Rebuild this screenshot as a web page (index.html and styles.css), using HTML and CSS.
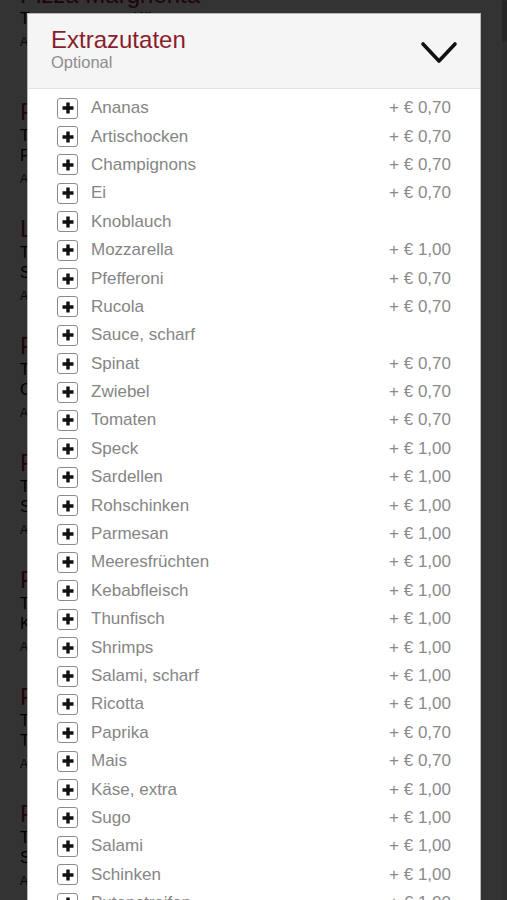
FILE: index.html
```html
<!DOCTYPE html>
<html lang="de">
<head>
    <meta charset="UTF-8">
    <meta name="viewport" content="width=device-width, initial-scale=1.0">
    <title>Extrazutaten</title>
    <link rel="stylesheet" href="styles.css">
</head>
<body>

    <div class="menu">
        <div class="pizza">
            <h2>Pizza Margherita</h2>
            <p>Tomatensauce, Käse</p>
            <small>Allergene: A, G</small>
        </div>
        <div class="pizza">
            <h2>Pizza Funghi</h2>
            <p>Tomatensauce, Käse,<br>Frische Champignons</p>
            <small>Allergene: A, G</small>
        </div>
        <div class="pizza">
            <h2>Lasagne</h2>
            <p>Tomatensauce, Käse,<br>Sugo, Bechamel</p>
            <small>Allergene: A, C, G</small>
        </div>
        <div class="pizza">
            <h2>Pizza Capricciosa</h2>
            <p>Tomatensauce, Käse,<br>Champignons, Schinken</p>
            <small>Allergene: A, G</small>
        </div>
        <div class="pizza">
            <h2>Pizza Salami</h2>
            <p>Tomatensauce, Käse,<br>Salami</p>
            <small>Allergene: A, G</small>
        </div>
        <div class="pizza">
            <h2>Pizza Prosciutto</h2>
            <p>Tomatensauce, Käse,<br>Kochschinken</p>
            <small>Allergene: A, G</small>
        </div>
        <div class="pizza">
            <h2>Pizza Tonno</h2>
            <p>Tomatensauce, Käse,<br>Thunfisch, Zwiebel</p>
            <small>Allergene: A, D, G</small>
        </div>
        <div class="pizza">
            <h2>Pizza Hawaii</h2>
            <p>Tomatensauce, Käse,<br>Schinken, Ananas</p>
            <small>Allergene: A, G</small>
        </div>
    </div>

    <div class="overlay"></div>
    <div class="scrollbar"><div class="thumb"></div></div>

    <div class="modal">
        <div class="modal-head">
            <div>
                <h1 class="modal-title">Extrazutaten</h1>
                <div class="modal-sub">Optional</div>
            </div>
            <svg class="chevron" width="38" height="24" viewBox="0 0 38 24">
                <path d="M3 3 L19 20 L35 3" fill="none" stroke="#111" stroke-width="3.6" stroke-linecap="round" stroke-linejoin="round"/>
            </svg>
        </div>

        <ul class="extras" id="extras"></ul>
    </div>

    <script>
    const extras=[
        ["Ananas","0,70"],["Artischocken","0,70"],["Champignons","0,70"],["Ei","0,70"],
        ["Knoblauch",""],["Mozzarella","1,00"],["Pfefferoni","0,70"],["Rucola","0,70"],
        ["Sauce, scharf",""],["Spinat","0,70"],["Zwiebel","0,70"],["Tomaten","0,70"],
        ["Speck","1,00"],["Sardellen","1,00"],["Rohschinken","1,00"],["Parmesan","1,00"],
        ["Meeresfrüchten","1,00"],["Kebabfleisch","1,00"],["Thunfisch","1,00"],["Shrimps","1,00"],
        ["Salami, scharf","1,00"],["Ricotta","1,00"],["Paprika","0,70"],["Mais","0,70"],
        ["Käse, extra","1,00"],["Sugo","1,00"],["Salami","1,00"],["Schinken","1,00"],
        ["Putenstreifen","1,00"]
    ];

    const list=document.getElementById("extras");

    const plusIcon=`<svg width="12" height="12" viewBox="0 0 12 12"><path d="M6 0.5 V11.5 M0.5 6 H11.5" stroke="#111" stroke-width="3.4"/></svg>`;

    extras.forEach(([name,price])=>{
        const li=document.createElement("li");
        li.className="extra";
        li.innerHTML=`<span class="check">${plusIcon}</span>
            <span class="extra-name">${name}</span>
            <span class="extra-price">${price ? "+ € "+price : ""}</span>`;
        list.appendChild(li);
    });
    </script>

</body>
</html>
```

FILE: styles.css
```css
*{
    box-sizing: border-box;
}

body{
    margin: 0;
    font-family: "Liberation Sans", Arial, sans-serif;
    background-color: #fff;
    overflow: hidden;
}

/* page behind the popup */
.menu{
    margin-top: -33px;
    padding-left: 20px;
}

.menu .pizza{
    height: 117px;
    padding-top: 14px;
}

.pizza h2{
    margin: 0;
    font-size: 24px;
    line-height: 28px;
    font-weight: normal;
    color: #8b1d2c;
}

.pizza p{
    margin: 0;
    font-size: 16px;
    line-height: 20px;
    color: #000;
}

.pizza small{
    display: block;
    margin-top: 4px;
    font-size: 12px;
    line-height: 18px;
    color: #222;
}

.overlay{
    position: fixed;
    top: 0;
    left: 0;
    width: 100%;
    height: 100%;
    z-index: 1;
    background-color: rgba(0, 0, 0, 0.8);
}

.scrollbar{
    position: fixed;
    top: 0;
    right: 0;
    width: 5px;
    height: 100%;
    z-index: 2;
    background-color: #2f2f2f;
}

.scrollbar .thumb{
    height: 42px;
    border-radius: 3px;
    background-color: #262626;
}

/* popup */
.modal{
    position: fixed;
    top: 13px;
    left: 27px;
    width: 454px;
    bottom: -20px;
    z-index: 3;
    background-color: #fff;
    border: 1px solid #b9b9b9;
    overflow: hidden;
}

.modal-head{
    height: 75px;
    padding: 12px 23px 0 23px;
    display: flex;
    justify-content: space-between;
    align-items: flex-start;
    background-color: #f5f5f5;
    border-bottom: 1px solid #e2e2e2;
}

.modal-title{
    margin: 0;
    font-size: 24px;
    line-height: 27px;
    font-weight: normal;
    color: #8b1d2c;
}

.modal-sub{
    margin-top: -1px;
    font-size: 16.5px;
    line-height: 20px;
    color: #8d8d8d;
}

.chevron{
    margin-top: 15px;
    margin-right: -1px;
}

.extras{
    list-style: none;
    margin: 0;
    padding: 5px 29px 0 29px;
}

.extra{
    height: 28.4px;
    display: flex;
    align-items: center;
    font-size: 17px;
    color: #858585;
}

.extra .check{
    width: 21px;
    height: 21px;
    margin-right: 13px;
    border: 1.5px solid #8a8a8a;
    border-radius: 3px;
    background-color: #fff;
    display: flex;
    align-items: center;
    justify-content: center;
}

.extra .check svg{
    display: block;
}

.extra-name{
    flex: 1;
}

.extra-price{
    color: #8a8a8a;
}
```
